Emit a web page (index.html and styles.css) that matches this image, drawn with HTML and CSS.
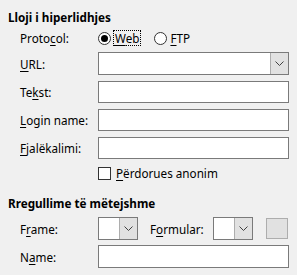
FILE: index.html
```html
<!DOCTYPE html>
<html lang="en">
<head>
    <meta charset="UTF-8">
    <title>Hiperlidhje</title>
    <link rel="stylesheet" href="styles.css">
</head>
<body>
    <div class="panel">
        <h2 class="group-title">Lloji i hiperlidhjes</h2>
        <div class="fields">
            <div class="row row-radio">
                <span class="label">Proto<u>c</u>ol:</span>
                <label class="radio checked"><span class="dot"></span><span class="focus"><u>W</u>eb</span></label>
                <label class="radio radio-ftp"><span class="dot"></span><span><u>F</u>TP</span></label>
            </div>
            <div class="row row-tall">
                <span class="label"><u>U</u>RL:</span>
                <div class="combo combo-wide">
                    <div class="combo-text"></div>
                    <div class="combo-btn">
                        <svg width="9" height="5" viewBox="0 0 9 5"><path d="M0.5 0.5 L4.5 4.5 L8.5 0.5" fill="none" stroke="#404040" stroke-width="1"/></svg>
                    </div>
                </div>
            </div>
            <div class="row">
                <span class="label">Te<u>k</u>st:</span>
                <div class="input"></div>
            </div>
            <div class="row">
                <span class="label"><u>L</u>ogin name:</span>
                <div class="input"></div>
            </div>
            <div class="row">
                <span class="label"><u>F</u>jalëkalimi:</span>
                <div class="input"></div>
            </div>
            <div class="row row-check">
                <span class="label"></span>
                <label class="check"><span class="box"></span><span><u>P</u>ërdorues anonim</span></label>
            </div>
        </div>

        <h2 class="group-title second">Rregullime të mëtejshme</h2>
        <div class="fields">
            <div class="row row-tall">
                <span class="label">F<u>r</u>ame:</span>
                <div class="combo combo-small">
                    <div class="combo-text"></div>
                    <div class="combo-btn">
                        <svg width="9" height="5" viewBox="0 0 9 5"><path d="M0.5 0.5 L4.5 4.5 L8.5 0.5" fill="none" stroke="#404040" stroke-width="1"/></svg>
                    </div>
                </div>
                <span class="label label-inline">F<u>o</u>rmular:</span>
                <div class="combo combo-small">
                    <div class="combo-text"></div>
                    <div class="combo-btn">
                        <svg width="9" height="5" viewBox="0 0 9 5"><path d="M0.5 0.5 L4.5 4.5 L8.5 0.5" fill="none" stroke="#404040" stroke-width="1"/></svg>
                    </div>
                </div>
                <div class="square-btn"></div>
            </div>
            <div class="row row-tall row-name">
                <span class="label">N<u>a</u>me:</span>
                <div class="input"></div>
            </div>
        </div>
    </div>
</body>
</html>
```
FILE: styles.css
```css
body {
    background-color: #f0f0f0;
    font-family: "Noto Sans", sans-serif;
    font-size: 11.7px;
    color: #000;
    margin: 0;
    padding: 0;
}

.panel {
    padding: 9px 8px 0 8px;
}

.group-title {
    margin: 0;
    font-size: 11.7px;
    font-weight: bold;
    line-height: 16px;
}

.group-title.second {
    margin-top: 14px;
}

.fields {
    padding-left: 12px;
}

.row {
    display: flex;
    align-items: center;
    height: 22px;
    margin-top: 6px;
}

.row-tall {
    height: 23px;
}

.row-radio {
    height: 16px;
    margin-top: 5px;
}

.row-check {
    height: 16px;
}

.row-name {
    margin-top: 5px;
}

.label {
    width: 78px;
    flex-shrink: 0;
    line-height: 16px;
}

u {
    text-underline-offset: 2px;
}

.input {
    flex: 1;
    height: 100%;
    box-sizing: border-box;
    background-color: #fff;
    border: 1px solid #7a7a7a;
}

.radio {
    display: flex;
    align-items: center;
    gap: 3px;
}

.radio .dot {
    width: 13px;
    height: 13px;
    box-sizing: border-box;
    border: 1px solid #333;
    border-radius: 50%;
    background-color: #fff;
    position: relative;
}

.radio.checked .dot::after {
    content: "";
    position: absolute;
    left: 2px;
    top: 2px;
    width: 7px;
    height: 7px;
    border-radius: 50%;
    background-color: #000;
}

.radio .focus {
    outline: 1px dotted #000;
    padding: 0 1px;
    line-height: 14px;
}

.radio-ftp {
    margin-left: 14px;
}

.combo {
    display: flex;
    height: 100%;
    box-sizing: border-box;
    border: 1px solid #7a7a7a;
    background-color: #fff;
}

.combo-wide {
    flex: 1;
}

.combo-small {
    width: 40px;
    flex-shrink: 0;
}

.combo-text {
    flex: 1;
}

.combo-btn {
    width: 17px;
    background-color: #e1e1e1;
    border-left: 1px solid #adadad;
    display: flex;
    align-items: center;
    justify-content: center;
}

.label-inline {
    width: 63px;
    margin-left: 12px;
}

.square-btn {
    width: 22px;
    height: 21px;
    box-sizing: border-box;
    margin-left: 13px;
    background-color: #e1e1e1;
    border: 1px solid #adadad;
}

.check {
    display: flex;
    align-items: center;
    gap: 5px;
}

.check .box {
    width: 13px;
    height: 13px;
    box-sizing: border-box;
    border: 1px solid #333;
    background-color: #fff;
}
```
